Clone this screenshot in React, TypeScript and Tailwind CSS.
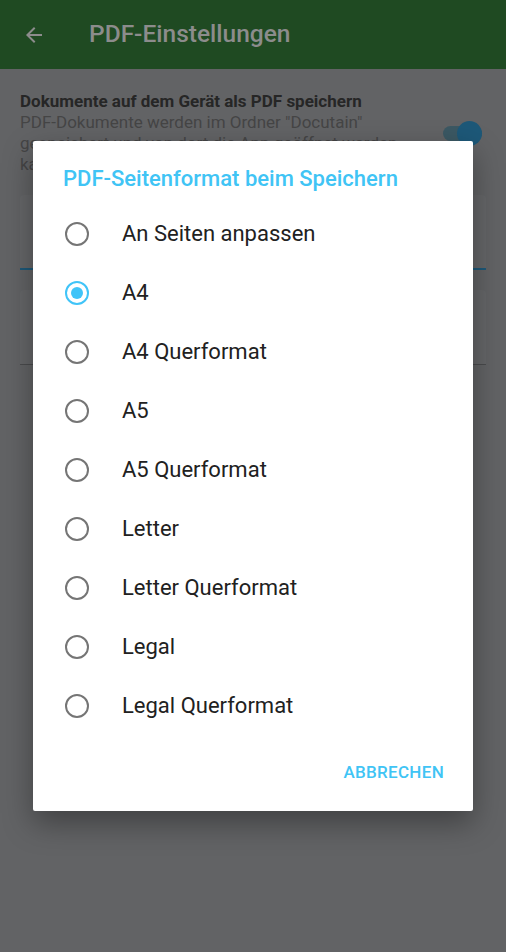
import React, { useState } from "react";

const formats = [
  "An Seiten anpassen",
  "A4",
  "A4 Querformat",
  "A5",
  "A5 Querformat",
  "Letter",
  "Letter Querformat",
  "Legal",
  "Legal Querformat",
];

const Radio = ({ checked }: { checked: boolean }) => (
  <span
    className={`flex h-[24px] w-[24px] shrink-0 items-center justify-center rounded-full border-[2.5px] ${
      checked ? "border-[#40c4f8]" : "border-[#757575]"
    }`}
  >
    {checked && <span className="h-[12px] w-[12px] rounded-full bg-[#40c4f8]" />}
  </span>
);

export default function App() {
  const [selected, setSelected] = useState("A4");

  return (
    <div
      className="relative h-[952px] w-[506px] overflow-hidden bg-[#626365]"
      style={{ fontFamily: "Roboto, 'Noto Sans', sans-serif" }}
    >
      {/* dimmed page behind the dialog */}
      <header className="flex h-[69px] items-center bg-[#1f4a22] pl-[22px]">
        <svg width="24" height="24" viewBox="0 0 24 24" className="text-[#8c8c8c]">
          <path
            d="M20 11H7.83l5.59-5.59L12 4l-8 8 8 8 1.41-1.41L7.83 13H20v-2z"
            fill="currentColor"
          />
        </svg>
        <h1 className="ml-[43px] text-[24.5px] font-medium text-[#8c8c8c]">PDF-Einstellungen</h1>
      </header>

      <div className="px-[20px] pt-[21px]">
        <div className="flex items-start">
          <div className="flex-1">
            <p className="text-[17px] leading-[22px] font-bold text-[#262626]">
              Dokumente auf dem Gerät als PDF speichern
            </p>
            <p className="w-[380px] text-[17px] leading-[21px] text-[#454545]">
              PDF-Dokumente werden im Ordner "Docutain"
              <br />
              gespeichert und von dort die App geöffnet werden
              <br />
              kann mit anderen Apps geteilt werden.
            </p>
          </div>
          <div className="relative mt-[36px] mr-[4px] h-[15px] w-[39px] rounded-full bg-[#3b5863]">
            <span className="absolute -top-[5px] right-0 h-[25px] w-[25px] rounded-full bg-[#1d5878]" />
          </div>
        </div>

        <div className="mt-[20px] h-[75px] rounded-t-[4px] border-b-2 border-[#1d5878] bg-[#656668]" />
        <div className="mt-[20px] h-[75px] rounded-t-[4px] border-b border-[#4a4b4d] bg-[#656668]" />
      </div>

      {/* dialog */}
      <div className="absolute top-[141px] left-[33px] w-[440px] rounded-[2px] bg-white shadow-[0_12px_30px_rgba(0,0,0,0.35)]">
        <h2 className="px-[30px] pt-[23px] text-[22px] leading-[30px] font-medium text-[#40c4f5]">
          PDF-Seitenformat beim Speichern
        </h2>
        <ul className="mt-[10px]">
          {formats.map((f) => (
            <li
              key={f}
              onClick={() => setSelected(f)}
              className="flex h-[59px] cursor-pointer items-center pl-[32px]"
            >
              <Radio checked={selected === f} />
              <span className="ml-[33px] text-[22px] text-[#212121]">{f}</span>
            </li>
          ))}
        </ul>
        <div className="flex justify-end pt-[20px] pr-[29px] pb-[20px]">
          <button className="h-[36px] text-[17px] font-medium tracking-[0.3px] text-[#40c4f5]">
            ABBRECHEN
          </button>
        </div>
      </div>
    </div>
  );
}
